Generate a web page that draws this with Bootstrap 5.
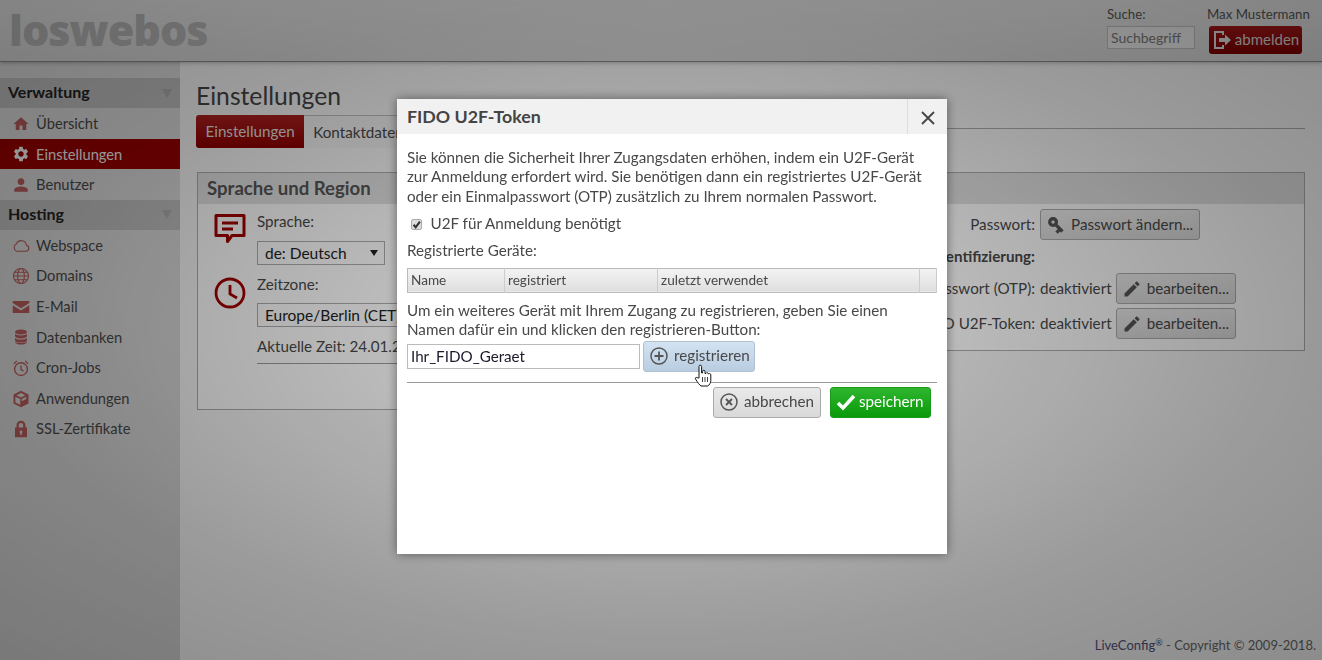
<!DOCTYPE html>
<html lang="de"><head><meta charset="utf-8"><title>Einstellungen</title>
<link href="https://cdn.jsdelivr.net/npm/bootstrap@5.3.0/dist/css/bootstrap.min.css" rel="stylesheet">
<style>
html,body{height:100%}
body{font-family:"Lato","Open Sans","Liberation Sans",sans-serif;font-size:15.2px;color:#484848;background:#f2f2f2;overflow:hidden;line-height:19.5px}
.top-bar{height:62px;background:linear-gradient(#e4e4e4,#d4d4d4);border-bottom:1px solid #888;padding:0 12px 0 9px;position:relative;z-index:2;box-shadow:0 1px 4px rgba(0,0,0,.25)}
.brand-word{font-family:"Open Sans",sans-serif;font-weight:800;font-size:43px;line-height:1;color:#b4b4b4;letter-spacing:-1px;padding-top:8px}
.top-tools{gap:12px;padding-top:5px;font-size:13.25px;color:#555}
.search-box{width:88px;height:23px;border:1px solid #bbb;background:#e8e8e8;font-size:14px;color:#777;padding:0 3px;line-height:21px;margin-top:1px}
.logout-btn{height:28px;width:93px;margin:1px 8px 0 2px;background:linear-gradient(#a01818,#7c0000);color:#d4d4d4;border-radius:3px;font-size:15px;gap:3px}
.logout-btn svg{width:20px;height:20px}
.side-col{width:180px;background:linear-gradient(#d8d8d8,#d0d0d0);height:598px;padding-top:16px;flex:none}
.side-head{height:30px;background:#bcbcbc;font-weight:700;color:#222;padding:0 8px 2px;font-size:16px}
.side-head::after{content:"";border-style:solid;border-width:9px 5px 0;border-color:#aaa transparent transparent;margin-top:2px}
.side-item{height:30.6px;padding:1px 0 0 12px;color:#484848;gap:6px;font-size:14.7px}
.side-item svg{width:18px;height:18px;fill:#b45a5a;stroke:#b45a5a;flex:none}
.side-item.on{background:#960000;color:#eee}
.side-item.on svg{fill:#f0f0f0;stroke:#f0f0f0}
.main-col{padding:0 17px 0 17px;min-width:0;position:relative}
.page-title{font-size:24.7px;font-weight:400;line-height:30px;margin:19px 0 4px -1px;color:#444}
.tab-strip{height:33px;flex:none}
.tab-one{background:linear-gradient(#aa2020,#8c0000);color:#ddd;border-radius:3px 0 0 3px;padding:0 9.5px;height:33px;line-height:33px;flex:none;margin-left:-1px}
.tab-two{background:#ededed;border-top:1px solid #bbb;padding:0 17px 0 9px;height:33px;line-height:32px;flex:none}
.tab-fill{height:14px;border-bottom:1px solid #aaa}
.panel-pair{gap:10px;margin-top:24px;align-items:flex-start}
.set-panel{flex:1 1 0;border:1px solid #aaa;background:#fafafa}
.panel-head{height:31px;background:#dedede;font-weight:700;font-size:18.6px;line-height:31px;padding-left:9px;color:#555}
.lang-body{height:205px;padding-top:8px}
.lang-icon{width:59px;flex:none;padding:1px 0 0 16px;gap:32px}
.lang-icon svg{width:32px;height:32px;display:block}
.lang-sel{width:128px;height:24px;border:1px solid #aaa;border-radius:0;padding:0 7px;font-size:15.5px;line-height:22px;color:#222;background:#fafafa url("data:image/svg+xml,%3Csvg xmlns='http://www.w3.org/2000/svg' width='8' height='6'%3E%3Cpath d='M0 0h8L4 6z' fill='%23222'/%3E%3C/svg%3E") no-repeat right 6px center}
.lang-first{margin-top:9px}
.zone-label{margin-top:10px}
.tz-sel{width:400px;margin-top:9px}
.time-line{border-bottom:1px solid #999;width:400px;height:37px;padding-top:10px;white-space:nowrap}
.cred-body{height:146px;padding-top:5px}
.cred-label{width:283px;flex:none;text-align:right;padding-right:5px}
.cred-row{height:35px}
.cred-row.first{height:31px}
.twofa-label{padding-top:7px;height:31px}
.gray-btn{background:linear-gradient(#e9e9e9,#d9d9d9);border:1px solid #aaa;border-radius:3px;height:31px;padding:0 5px;gap:5px;color:#484848;line-height:1;font-size:15.2px;white-space:nowrap}
.gray-btn svg{width:20px;height:20px;flex:none}
.pw-btn{width:160px}
.edit-btn{width:120px}
.foot-line{position:absolute;right:6px;bottom:5px;font-size:13px;color:#666;white-space:nowrap}
.foot-line a{text-decoration:none;color:#50507a}
.foot-line sup{font-size:9px;top:-.4em}
.dim-layer{background:radial-gradient(ellipse at center,rgba(0,0,0,.14) 0,rgba(0,0,0,.25) 30%,rgba(0,0,0,.37) 70%,rgba(0,0,0,.42) 100%)!important;opacity:1!important;width:100%;height:100%}
.dlg-wrap{width:550px;max-width:none;margin:99px 0 0 397px!important;pointer-events:auto}
.dlg-box{height:455px;border:0;border-radius:0;box-shadow:0 0 10px rgba(0,0,0,.45);display:block;color:#484848}
.dlg-head{height:35px;background:#f1f1f1;border:0;border-radius:0;padding:0 0 0 10px}
.dlg-title{font-size:17.8px;font-weight:700;color:#444;line-height:35px;margin:0}
.dlg-close{width:40px;height:35px;border:0;border-left:1px solid #ddd;background:none;padding:0}
.dlg-close svg{width:16px;height:16px}
.dlg-body{padding:13.5px 10px 0;font-size:15.2px}
.dlg-check{margin:6px 0 0 3.5px;height:20px;gap:9px;padding:0}
.dlg-check .form-check-input{width:11px;height:11px;margin:0;float:none;border:1px solid #aaa;border-radius:2px}
.dlg-check .form-check-input:checked[type=checkbox]{background-color:#ddd;border-color:#aaa;background-size:10px;--bs-form-check-bg-image:url("data:image/svg+xml,%3Csvg xmlns='http://www.w3.org/2000/svg' viewBox='0 0 10 10'%3E%3Cpath d='M2 5l2 2.500L8 2' fill='none' stroke='%23333' stroke-width='2'/%3E%3C/svg%3E")}
.dev-label{margin:5px 0 7px}
.dev-table{width:530px;margin:0;font-size:13.6px;table-layout:fixed;border:1px solid #bbb;height:25px;--bs-table-bg:transparent}
.dev-table th{font-weight:400;padding:0 3px;background:linear-gradient(#f4f4f4,#dedede);border-right:1px solid #ccc;border-bottom:0;color:#484848;line-height:23px}
.reg-para{margin:8px 0 0}
.reg-row{gap:3px;align-items:center;margin-top:1px}
.name-input{width:233px;height:25px;flex:none;border:1px solid #bbb;border-radius:0;padding:0 3px;font-size:15.2px;color:#1a1a2a;line-height:23px}
.reg-btn{background:linear-gradient(#d3e3f2,#b9cde1);border-color:#b0c0d0;height:31px;width:112px;padding:0 5px}
.sep-line{height:1px;background:#999;margin:10px 0 4px}
.foot-btns{gap:9px;padding-right:6px}
.abort-btn{width:108px}
.save-btn{background:linear-gradient(#2fb62f,#0a9a0a);border:1px solid #1a9a1a;color:#fff;border-radius:3px;height:31px;width:101px;padding:0 5px;gap:3px;font-size:15.2px;line-height:1}
.save-btn svg{width:20px;height:20px}
.hand-cursor{position:absolute;left:297px;top:230px;width:18px;height:23px}
</style></head><body>

<div class="top-bar d-flex justify-content-between">
  <div class="brand-word">loswebos</div>
  <div class="top-tools d-flex">
    <div><div>Suche:</div><div class="search-box">Suchbegriff</div></div>
    <div class="d-flex flex-column"><div class="text-nowrap">Max Mustermann</div>
      <div class="logout-btn d-flex align-items-center justify-content-center"><svg viewBox="0 0 20 20" fill="none" stroke="#ddd" stroke-width="2"><path d="M11 5V2H3v16h8v-3"/><path d="M7 8h6V4.500L19 10l-6 5.500V12H7z" fill="#ddd" stroke="none"/></svg>abmelden</div></div>
  </div>
</div>

<div class="d-flex">
  <nav class="side-col">
    <div class="side-head d-flex justify-content-between align-items-center">Verwaltung</div>
    <div class="side-item d-flex align-items-center"><svg viewBox="0 0 24 24"><path stroke="none" d="M10 20v-6h4v6h5v-8h3L12 3 2 12h3v8z"/></svg>Übersicht</div>
    <div class="side-item on d-flex align-items-center"><svg viewBox="0 0 24 24"><path stroke="none" d="M19.14 12.94c.04-.3.06-.61.06-.94 0-.32-.02-.64-.07-.94l2.03-1.58c.18-.14.23-.41.12-.61l-1.92-3.32c-.12-.22-.37-.29-.59-.22l-2.39.96c-.5-.38-1.03-.7-1.62-.94l-.36-2.54c-.04-.24-.24-.41-.48-.41h-3.84c-.24 0-.43.17-.47.41l-.36 2.54c-.59.24-1.13.57-1.62.94l-2.39-.96c-.22-.08-.47 0-.59.22L2.740 8.870c-.12.21-.08.47.12.61l2.030 1.580c-.05.3-.09.63-.09.94s.02.64.07.94l-2.030 1.580c-.18.14-.23.41-.12.61l1.920 3.320c.12.22.37.29.59.22l2.390-.96c.5.38 1.030.7 1.620.94l.36 2.540c.05.24.24.41.48.41h3.840c.24 0 .44-.17.47-.41l.36-2.540c.59-.24 1.130-.56 1.620-.94l2.390.96c.22.08.47 0 .59-.22l1.920-3.320c.12-.22.07-.47-.12-.61l-2.010-1.580zM12 15.600c-1.980 0-3.600-1.620-3.600-3.600s1.620-3.600 3.600-3.600 3.600 1.620 3.600 3.600-1.620 3.600-3.600 3.600z"/></svg>Einstellungen</div>
    <div class="side-item d-flex align-items-center"><svg viewBox="0 0 24 24"><path stroke="none" d="M12 12c2.600 0 4.500-2 4.500-4.500S14.600 3 12 3 7.500 5 7.500 7.500 9.400 12 12 12zm0 2c-3 0-9 1.300-9 4v3h18v-3c0-2.700-6-4-9-4z"/></svg>Benutzer</div>
    <div class="side-head d-flex justify-content-between align-items-center">Hosting</div>
    <div class="side-item d-flex align-items-center"><svg viewBox="0 0 24 24" style="fill:none;stroke-width:1.500"><path d="M6 19h12.500a4 4 0 0 0 .8-7.900 7 7 0 0 0-13.400-2A5.500 5.500 0 0 0 6 19z"/></svg>Webspace</div>
    <div class="side-item d-flex align-items-center"><svg viewBox="0 0 24 24" style="fill:none;stroke-width:1.500"><circle cx="12" cy="12" r="10"/><ellipse cx="12" cy="12" rx="4.500" ry="10"/><path d="M2 12h20M3.500 7h17M3.500 17h17"/></svg>Domains</div>
    <div class="side-item d-flex align-items-center"><svg viewBox="0 0 24 24"><path stroke="none" d="M1 4h22v2.500l-11 7-11-7zM1 9.500l11 7 11-7V20H1z"/></svg>E-Mail</div>
    <div class="side-item d-flex align-items-center"><svg viewBox="0 0 24 24"><path stroke="none" d="M12 2c5 0 8 1.400 8 3.200S17 8.500 12 8.500 4 7 4 5.200 7 2 12 2zM4 7.800c1.500 1.400 4.500 2.200 8 2.200s6.500-.8 8-2.200v3c0 1.800-3 3.200-8 3.200s-8-1.400-8-3.200zM4 13.200c1.500 1.400 4.500 2.200 8 2.200s6.500-.8 8-2.200v3c0 1.800-3 3.200-8 3.200s-8-1.400-8-3.200zM4 18.200c1.500 1.300 4.500 1.900 8 1.900s6.500-.6 8-1.900c0 2.200-3 3.800-8 3.800s-8-1.600-8-3.800z"/></svg>Datenbanken</div>
    <div class="side-item d-flex align-items-center"><svg viewBox="0 0 24 24" style="fill:none;stroke-width:1.800"><circle cx="12" cy="13.500" r="8.500"/><path d="M12 8.500v5.500l3.500 2M2.500 6.500L6.500 2.500M21.500 6.500l-4-4"/></svg>Cron-Jobs</div>
    <div class="side-item d-flex align-items-center"><svg viewBox="0 0 24 24"><path stroke="none" d="M12 1l10 5v12l-10 5-10-5V6zM12 4L6 7l6 3 6-3zM4.500 9v7.500l6.500 3.200V12zM13 12v3l6-3V9z"/></svg>Anwendungen</div>
    <div class="side-item d-flex align-items-center"><svg viewBox="0 0 24 24"><path stroke="none" d="M6 10V7a6 6 0 0 1 12 0v3h2v13H4V10zm3 0h6V7a3 3 0 0 0-6 0zm3 4a2 2 0 0 0-1 3.700V20h2v-2.300A2 2 0 0 0 12 14z"/></svg>SSL-Zertifikate</div>
  </nav>

  <main class="main-col flex-grow-1">
    <h1 class="page-title">Einstellungen</h1>
    <div class="tab-strip d-flex">
      <div class="tab-one">Einstellungen</div>
      <div class="tab-two">Kontaktdaten</div>
      <div class="tab-fill flex-grow-1"></div>
    </div>
    <div class="panel-pair d-flex">
      <section class="set-panel">
        <div class="panel-head">Sprache und Region</div>
        <div class="lang-body d-flex">
          <div class="lang-icon d-flex flex-column">
            <svg viewBox="0 0 32 32" fill="none" stroke="#a00000" stroke-width="3"><path d="M2 2.500h28v20H18l-4.500 6v-6H2z" stroke-linejoin="round"/><path d="M8 10h16M8 16h11"/></svg>
            <svg viewBox="0 0 32 32" fill="none" stroke="#a00000" stroke-width="2.800"><circle cx="16" cy="16" r="14"/><path d="M16 8v9l7 4"/></svg>
          </div>
          <div class="flex-grow-1">
            <div>Sprache:</div>
            <div class="lang-sel form-select lang-first">de: Deutsch</div>
            <div class="zone-label">Zeitzone:</div>
            <div class="lang-sel form-select tz-sel">Europe/Berlin (CET)</div>
            <div class="time-line">Aktuelle Zeit: 24.01.2018 10:14</div>
          </div>
        </div>
      </section>
      <section class="set-panel">
        <div class="panel-head"></div>
        <div class="cred-body">
          <div class="cred-row first d-flex align-items-center"><div class="cred-label">Passwort:</div><button class="btn gray-btn pw-btn d-flex align-items-center" type="button"><svg viewBox="0 0 24 24" fill="#555"><path transform="rotate(45 12 12)" d="M12.650 10C11.830 7.670 9.610 6 7 6c-3.310 0-6 2.690-6 6s2.690 6 6 6c2.610 0 4.830-1.670 5.650-4H17v4h4v-4h2v-4H12.650zM7 14c-1.100 0-2-.9-2-2s.9-2 2-2 2 .9 2 2-.9 2-2 2z"/></svg>Passwort ändern...</button></div>
          <div class="cred-label twofa-label fw-bold">Zwei-Faktor-Authentifizierung:</div>
          <div class="cred-row d-flex align-items-center"><div class="cred-label">Einmalpasswort (OTP):</div><span>deaktiviert</span><button class="btn gray-btn edit-btn d-flex align-items-center ms-1" type="button"><svg viewBox="0 0 24 24" fill="#555"><path d="M3 17.250V21h3.750L17.810 9.940l-3.750-3.750L3 17.250zM20.710 7.040c.39-.39.39-1.020 0-1.410l-2.340-2.340c-.39-.39-1.020-.39-1.410 0l-1.830 1.830 3.750 3.750 1.830-1.830z"/></svg>bearbeiten...</button></div>
          <div class="cred-row d-flex align-items-center"><div class="cred-label">FIDO U2F-Token:</div><span>deaktiviert</span><button class="btn gray-btn edit-btn d-flex align-items-center ms-1" type="button"><svg viewBox="0 0 24 24" fill="#555"><path d="M3 17.250V21h3.750L17.810 9.940l-3.750-3.750L3 17.250zM20.710 7.040c.39-.39.39-1.020 0-1.410l-2.340-2.340c-.39-.39-1.020-.39-1.410 0l-1.830 1.830 3.750 3.750 1.830-1.830z"/></svg>bearbeiten...</button></div>
        </div>
      </section>
    </div>
  </main>
</div>
<div class="foot-line"><a href="#">LiveConfig<sup>®</sup></a> - Copyright © 2009-2018.</div>

<div class="modal-backdrop dim-layer"></div>
<div class="modal d-block overflow-hidden">
  <div class="modal-dialog dlg-wrap">
    <div class="modal-content dlg-box">
      <div class="modal-header dlg-head justify-content-between">
        <h5 class="dlg-title">FIDO U2F-Token</h5>
        <button class="dlg-close" type="button" aria-label="Schließen"><svg viewBox="0 0 16 16" fill="none" stroke="#444" stroke-width="1.800"><path d="M2 2l12 12M14 2L2 14"/></svg></button>
      </div>
      <div class="modal-body dlg-body position-relative">
        <div>Sie können die Sicherheit Ihrer Zugangsdaten erhöhen, indem ein U2F-Gerät<br>zur Anmeldung erfordert wird. Sie benötigen dann ein registriertes U2F-Gerät<br>oder ein Einmalpasswort (OTP) zusätzlich zu Ihrem normalen Passwort.</div>
        <div class="form-check dlg-check d-flex align-items-center"><input class="form-check-input" type="checkbox" checked id="u2f"><label for="u2f">U2F für Anmeldung benötigt</label></div>
        <div class="dev-label">Registrierte Geräte:</div>
        <table class="table dev-table"><colgroup><col style="width:97px"><col style="width:153px"><col style="width:262px"><col></colgroup>
          <thead><tr><th>Name</th><th>registriert</th><th>zuletzt verwendet</th><th></th></tr></thead></table>
        <div class="reg-para">Um ein weiteres Gerät mit Ihrem Zugang zu registrieren, geben Sie einen<br>Namen dafür ein und klicken den registrieren-Button:</div>
        <div class="reg-row d-flex">
          <input class="form-control name-input" type="text" value="Ihr_FIDO_Geraet">
          <button class="btn gray-btn reg-btn d-flex align-items-center" type="button"><svg viewBox="0 0 20 20" fill="none" stroke="#555" stroke-width="1.500"><circle cx="10" cy="10" r="8"/><path d="M10 5.500v9M5.500 10h9" stroke-width="1.800"/></svg>registrieren</button>
        </div>
        <div class="sep-line"></div>
        <div class="foot-btns d-flex justify-content-end">
          <button class="btn gray-btn abort-btn d-flex align-items-center" type="button"><svg viewBox="0 0 20 20" fill="none" stroke="#555" stroke-width="1.500"><circle cx="10" cy="10" r="8"/><path d="M7 7l6 6M13 7l-6 6" stroke-width="1.800"/></svg>abbrechen</button>
          <button class="btn save-btn d-flex align-items-center" type="button"><svg viewBox="0 0 20 20" fill="none" stroke="#fff" stroke-width="3.500"><path d="M2 11l5 5L18 4"/></svg>speichern</button>
        </div>
        <svg class="hand-cursor" viewBox="0 0 18 23"><path d="M5 2.500a1.300 1.300 0 0 1 2.600 0V9l1-.1V7.500a1.200 1.200 0 0 1 2.400 0v2l1-.1a1.200 1.200 0 0 1 2.300.5l.5-.1a1.200 1.200 0 0 1 2 1v5.700c0 2.500-1.500 4.500-3 5.500H7c-1.500-1-3-3-5.500-7-.6-1 .5-2.200 1.700-1.300L5 14z" fill="#fff" stroke="#111" stroke-width="1"/><path d="M8.500 13v5M11 13v5M13.500 13v5" stroke="#111" stroke-width=".8"/></svg>
      </div>
    </div>
  </div>
</div>
</body></html>
